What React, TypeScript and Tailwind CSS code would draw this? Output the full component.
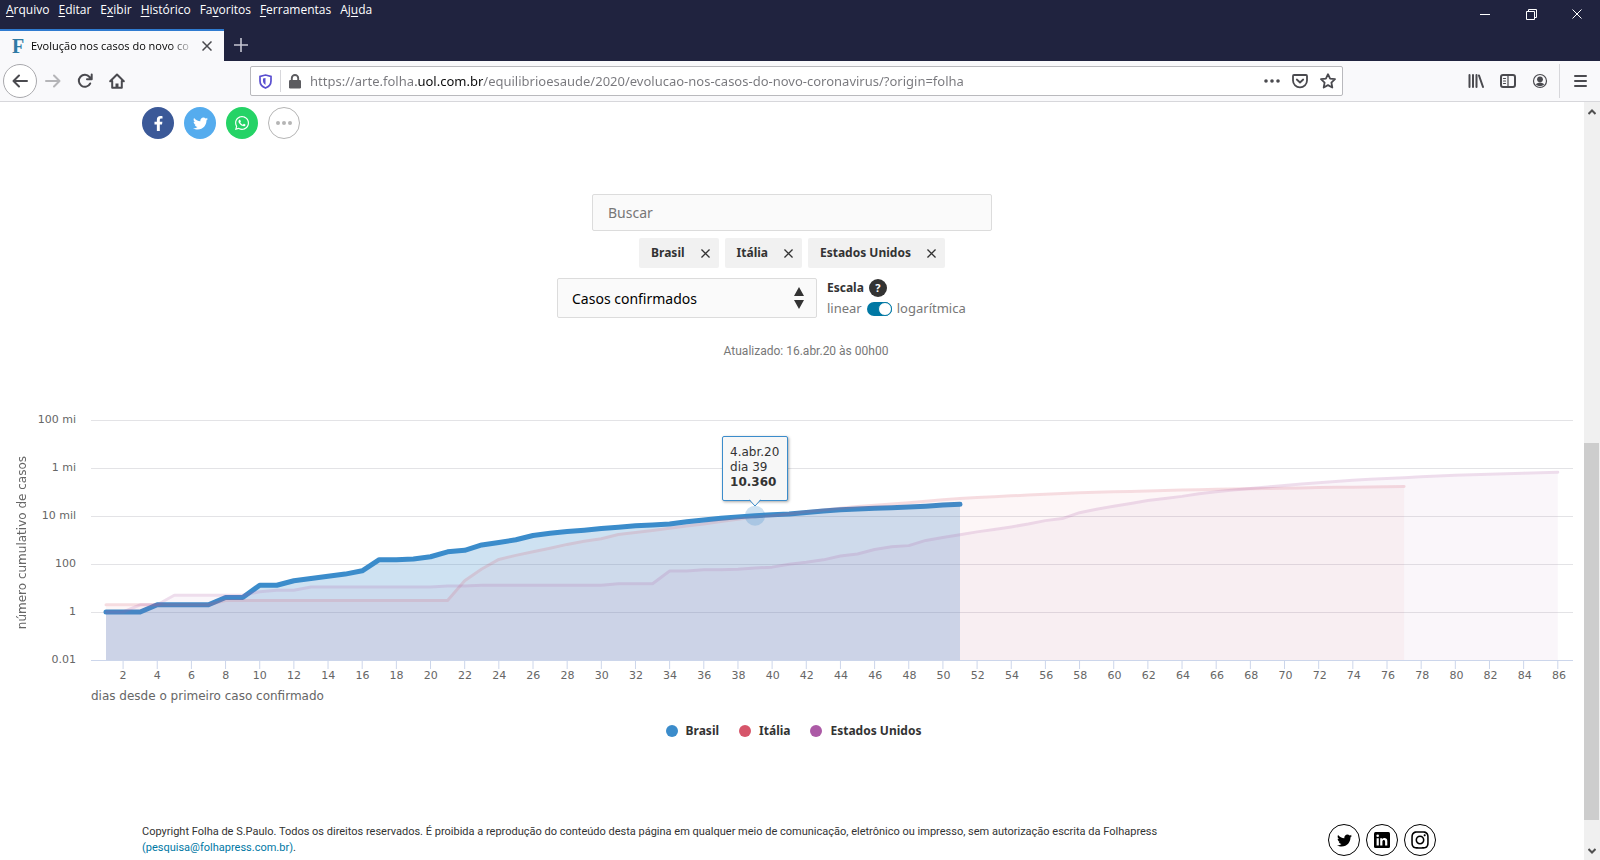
import { useState, type ReactNode } from "react";
import { FaFacebookF, FaInstagram, FaTwitter, FaWhatsapp } from "react-icons/fa";

const BRASIL = [
  1, 1, 1, 2, 2, 2, 2, 4, 4, 13, 13, 20, 25, 31, 38, 52, 151, 151, 162, 200, 321, 372, 621, 793, 1021, 1546, 1924,
  2247, 2554, 2985, 3417, 3904, 4256, 4661, 5717, 6836, 8044, 9194, 10360, 11254, 12183, 14034, 16188, 18145, 19789,
  20962, 22318, 23723, 25684, 28610, 30683,
];

const ITALIA = [
  2, 2, 2, 2, 2, 2, 2, 3, 3, 3, 3, 3, 3, 3, 3, 3, 3, 3, 3, 3, 3, 20, 62, 155, 229, 322, 453, 655, 888, 1128, 1694,
  2036, 2502, 3089, 3858, 4636, 5883, 7375, 9172, 10149, 12462, 15113, 17660, 21157, 24747, 27980, 31506, 35713,
  41035, 47021, 53578, 59138, 63927, 69176, 74386, 80589, 86498, 92472, 97689, 101739, 105792, 110574, 115242,
  119827, 124632, 128948, 132547, 135586, 139422, 143626, 147577, 152271, 156363, 159516, 162488, 165155, 168941,
];

const EUA = [
  1, 1, 2, 2, 5, 5, 5, 5, 5, 7, 8, 8, 11, 11, 11, 11, 11, 11, 11, 11, 12, 12, 13, 13, 13, 13, 13, 13, 13, 13, 15, 15,
  15, 51, 51, 57, 58, 60, 68, 74, 98, 118, 149, 217, 262, 402, 518, 583, 959, 1281, 1663, 2179, 2727, 3499, 4632,
  6421, 7783, 13747, 19273, 25600, 33276, 43847, 53740, 65778, 83836, 101657, 121478, 140886, 161807, 188172, 213372,
  243453, 275586, 308850, 337072, 366614, 396223, 429052, 461437, 496535, 526396, 555313, 580619, 607670, 636350,
  667801,
];

const W = 1482;
const H = 240;
const x = (day: number) => 15 + (day - 1) * 17.08;
const y = (cases: number) => H - (Math.log10(cases) + 2) * 24;

const yTicks = ["100 mi", "1 mi", "10 mil", "100", "1", "0.01"];
const xTicks = Array.from({ length: 43 }, (_, i) => (i + 1) * 2);

function Series({ data, color, faded = false }: { data: number[]; color: string; faded?: boolean }) {
  const line = data.map((v, i) => `${x(i + 1)},${y(v)}`).join(" ");
  return (
    <g opacity={faded ? 0.2 : 1}>
      <polygon points={`${x(1)},${H} ${line} ${x(data.length)},${H}`} fill={color} fillOpacity={0.25} />
      <polyline
        points={line}
        fill="none"
        stroke={color}
        strokeWidth={faded ? 3 : 5}
        strokeLinecap="round"
        strokeLinejoin="round"
        vectorEffect="non-scaling-stroke"
      />
    </g>
  );
}

function Chart() {
  return (
    <section className="mt-[35px] font-['DejaVu_Sans',sans-serif] text-[11px] text-[#666]">
      <div className="flex pr-[11px]">
        <div className="flex w-11 items-center justify-center pb-4">
          <span className="rotate-180 text-[12px] whitespace-nowrap [writing-mode:vertical-rl]">
            número cumulativo de casos
          </span>
        </div>
        <div className="w-8 text-right">
          {yTicks.map((t) => (
            <div key={t} className="flex h-12 items-center justify-end whitespace-nowrap">
              {t}
            </div>
          ))}
        </div>
        <div className="relative ml-[15px] min-w-0 flex-1 pt-6">
          <svg className="block h-[249px] w-full" viewBox={`0 0 ${W} 249`} preserveAspectRatio="none">
            {yTicks.map((t, i) => (
              <line
                key={t}
                x1={0}
                x2={W}
                y1={i * 48 + 0.5}
                y2={i * 48 + 0.5}
                stroke={i === 5 ? "#ccd6eb" : "#e3e3e6"}
                vectorEffect="non-scaling-stroke"
              />
            ))}
            {xTicks.map((d) => (
              <line key={d} x1={x(d)} x2={x(d)} y1={H} y2={249} stroke="#ccd6eb" vectorEffect="non-scaling-stroke" />
            ))}
            <Series data={BRASIL} color="#3b8ccb" />
            <Series data={ITALIA} color="#d6556a" faded />
            <Series data={EUA} color="#ac5aa6" faded />
            <circle cx={x(39)} cy={y(10360)} r={10} fill="#3b8ccb" fillOpacity={0.25} />
          </svg>
          <div
            className="absolute top-[40px] h-[65px] w-[66px] -translate-x-1/2 rounded-xs border border-[#3b8ccb] bg-[#f7f7f7] px-[7px] pt-2 text-[12px] leading-[15px] text-[#333] shadow-[1px_1px_3px_rgba(0,0,0,0.35)]"
            style={{ left: `${(x(39) / W) * 100}%` }}
          >
            4.abr.20
            <br />
            dia 39
            <br />
            <b>10.360</b>
            <svg className="absolute -bottom-[7px] left-[26px] h-[8px] w-3" viewBox="0 0 12 8">
              <path d="M0 0L6 6.5L12 0" fill="#f7f7f7" />
              <path d="M0 .5L6 7L12 .5" fill="none" stroke="#3b8ccb" />
            </svg>
          </div>
          <div className="-mt-[3px] -mr-[3px] flex pl-[15px]">
            {xTicks.map((d) => (
              <span key={d} className="min-w-0 flex-1 text-center leading-5">
                {d}
              </span>
            ))}
          </div>
          <div className="text-[12px] leading-5">dias desde o primeiro caso confirmado</div>
        </div>
      </div>
      <ul className="mt-[15px] flex justify-center gap-5 pl-[3px] font-['Noto_Sans',sans-serif] text-[12px] leading-5 font-bold text-[#333]">
        <li className="flex items-center gap-2">
          <i className="size-3 rounded-full bg-[#3b8ccb]" />
          Brasil
        </li>
        <li className="flex items-center gap-2">
          <i className="size-3 rounded-full bg-[#d6556a]" />
          Itália
        </li>
        <li className="flex items-center gap-2">
          <i className="size-3 rounded-full bg-[#ac5aa6]" />
          Estados Unidos
        </li>
      </ul>
    </section>
  );
}

function Close({ className }: { className: string }) {
  return (
    <svg className={className} viewBox="0 0 10 10" fill="none" stroke="currentColor">
      <path d="M.5.5l9 9M9.5.5l-9 9" />
    </svg>
  );
}

function BarButton({ label, className = "", children }: { label: string; className?: string; children: ReactNode }) {
  return (
    <button aria-label={label} className={`flex h-8 w-8 items-center justify-center text-[#4a4a4f] ${className}`}>
      <svg className="size-4" viewBox="0 0 16 16" fill="none" stroke="currentColor" strokeWidth={2} strokeLinecap="round" strokeLinejoin="round">
        {children}
      </svg>
    </button>
  );
}

const menus = [
  ["", "A", "rquivo"],
  ["", "E", "ditar"],
  ["E", "x", "ibir"],
  ["", "H", "istórico"],
  ["Fa", "v", "oritos"],
  ["", "F", "erramentas"],
  ["Aj", "u", "da"],
];

function BrowserChrome() {
  return (
    <header className="font-['Open_Sans',sans-serif] text-[12px]">
      <div className="flex h-[61px] justify-between bg-[#20233f] text-white">
        <div className="flex flex-col justify-between">
          <nav className="flex gap-[9px] pl-[6px] leading-5">
            {menus.map(([a, b, c]) => (
              <button key={b + c}>
                {a}
                <u className="underline-offset-2">{b}</u>
                {c}
              </button>
            ))}
          </nav>
          <div className="flex h-8 items-center">
            <div className="flex h-full w-56 items-center border-t-2 border-[#2f7bd0] bg-[#f9f9fb] pl-3 text-black">
              <span className="w-[19px] font-['Liberation_Serif',serif] text-[20px] leading-none font-bold text-[#2f7ba5]">F</span>
              <span className="w-[164px] bg-linear-to-r from-black from-85% to-transparent bg-clip-text text-[11px] whitespace-nowrap text-transparent">
                Evolução nos casos do novo co
              </span>
              <button aria-label="Fechar aba" className="ml-[7px] text-[#4a4a4f]">
                <Close className="size-[10px] stroke-[1.5]" />
              </button>
            </div>
            <button aria-label="Nova aba" className="ml-[10px]">
              <svg className="size-[14px]" viewBox="0 0 14 14" stroke="#c5c6d2" strokeWidth={1.6}>
                <path d="M7 0v14M0 7h14" />
              </svg>
            </button>
          </div>
        </div>
        <div className="flex h-7">
          <button aria-label="Minimizar" className="flex w-[46px] items-center justify-center">
            <span className="h-px w-[10px] bg-white" />
          </button>
          <button aria-label="Restaurar" className="flex w-[46px] items-center justify-center">
            <svg className="size-[11px]" viewBox="0 0 11 11" fill="none" stroke="#fff">
              <path d="M.5 2.5h8v8h-8zM2.5 2.5v-2h8v8h-2" />
            </svg>
          </button>
          <button aria-label="Fechar" className="flex w-[46px] items-center justify-center">
            <Close className="size-[10px]" />
          </button>
        </div>
      </div>

      <div className="flex h-[41px] items-center border-b border-[#d7d7db] bg-[#f9f9fb]">
        <button aria-label="Voltar" className="ml-[3px] flex size-[34px] items-center justify-center rounded-full border border-[#a9a9ad] bg-white text-[#4a4a4f]">
          <svg className="size-4" viewBox="0 0 16 16" fill="none" stroke="currentColor" strokeWidth={2} strokeLinecap="round" strokeLinejoin="round">
            <path d="M15 8H1.5M7 2.5L1.5 8L7 13.5" />
          </svg>
        </button>
        <BarButton label="Avançar" className="text-[#b5b5b8]!">
          <path d="M1 8h13.5M9 2.5L14.5 8L9 13.5" />
        </BarButton>
        <BarButton label="Atualizar">
          <path d="M13.2 10.5A6 6 0 1 1 12.5 4L14.5 6M14.7 1.5V6.3H10" />
        </BarButton>
        <BarButton label="Início">
          <path d="M1.2 8.2L8 1.5L14.8 8.2M3.2 8v6.8h9.6V8" />
          <path d="M8 14V10.5" strokeWidth={3} strokeLinecap="butt" />
        </BarButton>
        <div className="ml-[117px] flex h-[30px] min-w-0 flex-[1_1_1092px] items-center rounded-xs border border-[#b9b9bd] bg-white px-2">
          <svg className="h-[15px] w-[13px] shrink-0" viewBox="0 0 13 15" fill="none" stroke="#5a4fd0" strokeWidth={1.7}>
            <path d="M6.5 1L12 2.3V7C12 10.5 9.6 12.8 6.5 14C3.4 12.8 1 10.5 1 7V2.3Z" />
            <path d="M6.5 4v7C4.7 9.9 4 8.5 4 6.5V4.5Z" fill="#5a4fd0" stroke="none" />
          </svg>
          <span className="ml-2 h-[22px] w-px bg-[#d7d7db]" />
          <svg className="ml-2 h-[15px] w-3 shrink-0" viewBox="0 0 12 15">
            <rect y="6" width="12" height="8.5" rx="1.2" fill="#5c5c60" />
            <path d="M2.8 7V4.2a3.2 3.2 0 0 1 6.4 0V7" fill="none" stroke="#5c5c60" strokeWidth={1.9} />
          </svg>
          <input
            aria-label="Endereço"
            defaultValue="https://arte.folha.uol.com.br/equilibrioesaude/2020/evolucao-nos-casos-do-novo-coronavirus/?origin=folha"
            className="ml-[9px] min-w-0 flex-1 bg-[linear-gradient(to_right,#77777c_106px,#0c0c0d_106px,#0c0c0d_173px,#77777c_173px)] bg-clip-text pt-px font-['Noto_Sans',sans-serif] text-[13px] text-transparent caret-black outline-none"
          />
          <BarButton label="Ações da página" className="w-7!">
            <path d="M2 8h.01M8 8h.01M14 8h.01" strokeWidth={3.6} />
          </BarButton>
          <BarButton label="Salvar no Pocket" className="w-7!">
            <path d="M2 2h12a1 1 0 0 1 1 1v4.500a7 6.800 0 0 1-14 0V3a1 1 0 0 1 1-1zM4.800 6.500L8 9.500L11.200 6.500" strokeWidth={1.8} />
          </BarButton>
          <BarButton label="Favoritar" className="-mr-2 w-7!">
            <path d="M8 1.2L10.1 5.6L15 6.2L11.4 9.6L12.3 14.5L8 12.1L3.7 14.5L4.6 9.6L1 6.2L5.9 5.6Z" strokeWidth={1.8} />
          </BarButton>
        </div>
        <BarButton label="Biblioteca" className="ml-[117px]">
          <path d="M1.5 2v12M5 2v12M8.5 2v12M11 2.5L15 14" />
        </BarButton>
        <BarButton label="Barra lateral">
          <rect x="1" y="2" width="14" height="12" rx="2" />
          <path d="M8 2v12M3.5 5.5h2M3.5 8h2M3.5 10.5h2" strokeWidth={1.2} />
        </BarButton>
        <BarButton label="Conta">
          <circle cx="8" cy="8" r="6.5" strokeWidth={1.2} />
          <circle cx="8" cy="6.3" r="2.9" fill="currentColor" stroke="none" />
          <path d="M3.6 11.2Q8 7.8 12.4 11.2Q8 15.5 3.6 11.2Z" fill="currentColor" stroke="none" />
        </BarButton>
        <span className="ml-[3px] h-[34px] w-px bg-[#d7d7db]" />
        <BarButton label="Menu" className="mx-1">
          <path d="M3 3h11M3 8h11M3 13h11" />
        </BarButton>
      </div>
    </header>
  );
}

function Filters() {
  const [log, setLog] = useState(true);

  return (
    <div className="mx-auto flex w-[470px] flex-col items-center">
      <input
        type="search"
        aria-label="Buscar"
        placeholder="Buscar"
        className="h-[37px] w-[400px] rounded-xs border border-[#dcdcdc] bg-[#fafafa] px-[15px] text-[14px] placeholder:text-[#777]"
      />
      <div className="mt-[7px] flex gap-[6px]">
        {["Brasil", "Itália", "Estados Unidos"].map((name) => (
          <button key={name} className="flex h-[30px] items-center gap-4 rounded-xs bg-[#f1f1f1] pr-[9px] pl-3 text-[12px] font-bold text-[#333]">
            {name}
            <Close className="size-[9px] stroke-[1.5]" />
          </button>
        ))}
      </div>
      <div className="mt-[10px] flex w-full gap-[10px]">
        <div className="relative">
          <select
            aria-label="Métrica"
            className="h-10 w-[260px] appearance-none rounded-xs border border-[#dcdcdc] bg-[#fafafa] px-[14px] text-[14px] text-black"
          >
            <option>Casos confirmados</option>
            <option>Mortes</option>
          </select>
          <svg className="pointer-events-none absolute top-[9px] right-[13px] h-[22px] w-[10px]" viewBox="0 0 10 22" fill="#333">
            <path d="M5 0l5 9H0zM5 22l5-9H0z" />
          </svg>
        </div>
        <div className="text-[13px] text-[#777]">
          <div className="flex h-5 items-center gap-[5px] text-[12px] font-bold text-[#333]">
            Escala
            <button aria-label="Ajuda" className="size-[18px] rounded-full bg-[#333] text-[11px] leading-[18px] text-white">
              ?
            </button>
          </div>
          <label className="flex h-[22px] items-center gap-[5px]">
            linear
            <input
              type="checkbox"
              checked={log}
              onChange={() => setLog(!log)}
              className="flex h-[14px] w-[25px] appearance-none rounded-full bg-[#0078a4] before:size-[14px] before:rounded-full before:border before:border-[#0078a4] before:bg-white checked:justify-end"
            />
            logarítmica
          </label>
        </div>
      </div>
    </div>
  );
}

export default function App() {
  return (
    <div className="flex h-screen flex-col overflow-hidden bg-white">
      <BrowserChrome />
      <div className="flex min-h-0 flex-1">
        <main className="min-w-0 flex-1 overflow-hidden pt-[5px] font-['Noto_Sans',sans-serif]">
          <div className="flex gap-[10px] px-[142px] text-white">
            <a href="#facebook" aria-label="Facebook" className="flex size-8 items-center justify-center rounded-full bg-[#3b5998]">
              <FaFacebookF className="size-[15px]" />
            </a>
            <a href="#twitter" aria-label="Twitter" className="flex size-8 items-center justify-center rounded-full bg-[#55acee]">
              <FaTwitter className="size-[15px]" />
            </a>
            <a href="#whatsapp" aria-label="WhatsApp" className="flex size-8 items-center justify-center rounded-full bg-[#25d366]">
              <FaWhatsapp className="size-4" />
            </a>
            <button aria-label="Mais opções" className="flex size-8 items-center justify-center gap-[2px] rounded-full border border-[#b5b5b5]">
              <i className="size-[4px] rounded-full bg-[#b5b5b5]" />
              <i className="size-[4px] rounded-full bg-[#b5b5b5]" />
              <i className="size-[4px] rounded-full bg-[#b5b5b5]" />
            </button>
          </div>

          <div className="mt-[55px]">
            <Filters />
          </div>
          <p className="mt-[21px] pl-7 text-center font-[Roboto,sans-serif] text-[12px] leading-5 text-[#777]">
            Atualizado: 16.abr.20 às 00h00
          </p>

          <Chart />

          <footer className="mt-[83px] flex items-start justify-between pr-[148px] pl-[142px]">
            <p className="max-w-[1080px] font-[Roboto,sans-serif] text-[11px] leading-4 text-[#333]">
              Copyright Folha de S.Paulo. Todos os direitos reservados. É proibida a reprodução do conteúdo desta página em
              qualquer meio de comunicação, eletrônico ou impresso, sem autorização escrita da Folhapress
              <br />
              <a href="mailto:pesquisa@folhapress.com.br" className="text-[#0078a4]">
                (pesquisa@folhapress.com.br)
              </a>
              .
            </p>
            <div className="flex gap-[6px] text-black">
              <a href="#tw" aria-label="Twitter" className="flex size-8 items-center justify-center rounded-full border border-black">
                <FaTwitter className="size-[15px]" />
              </a>
              <a href="#in" aria-label="LinkedIn" className="flex size-8 items-center justify-center rounded-full border border-black">
                <svg className="size-4" viewBox="0 0 16 16">
                  <rect width="16" height="16" rx="1.5" />
                  <circle cx="3.7" cy="3.7" r="1.3" fill="#fff" />
                  <path d="M2.6 6.2h2.2V13.5H2.6zM6.2 6.2h2.1v1C9.3 5.500 13.3 5.300 13.3 9v4.500h-2.200V9.700c0-2.200-2.700-2-2.700 0v3.800H6.200z" fill="#fff" />
                </svg>
              </a>
              <a href="#ig" aria-label="Instagram" className="flex size-8 items-center justify-center rounded-full border border-black">
                <FaInstagram className="size-5" />
              </a>
            </div>
          </footer>
        </main>

        <div className="flex w-4 flex-col items-center bg-[#f0f0f0] text-[#505050]">
          <svg className="my-[6px] h-[8px] w-[8px] shrink-0" viewBox="0 0 8 8" fill="none" stroke="currentColor" strokeWidth={2}>
            <path d="M.5 6L4 2.5L7.5 6" />
          </svg>
          <div className="flex-[320_1_0]" />
          <div className="w-[15px] flex-[376_1_0] self-start bg-[#cdcdcd]" />
          <div className="flex-[22_1_0]" />
          <svg className="my-[5px] h-[8px] w-[8px] shrink-0" viewBox="0 0 8 8" fill="none" stroke="currentColor" strokeWidth={2}>
            <path d="M.5 2L4 5.5L7.5 2" />
          </svg>
        </div>
      </div>
    </div>
  );
}
